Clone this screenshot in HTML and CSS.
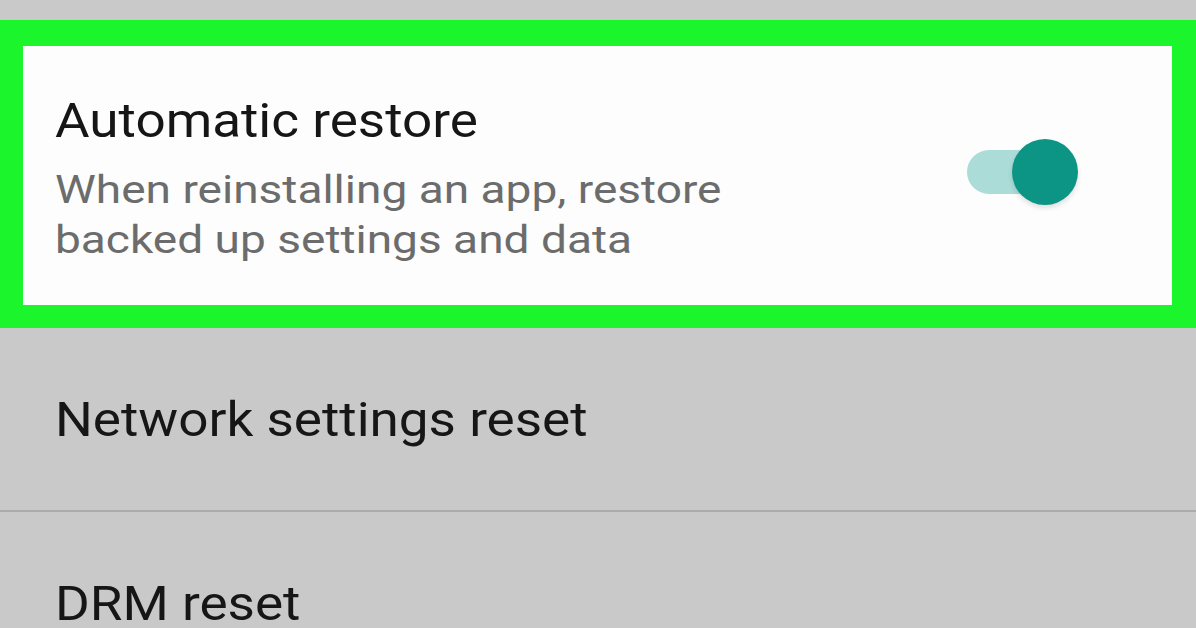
FILE: index.html
```html
<!DOCTYPE html>
<html>
<head>
<meta charset="utf-8">
<link rel="stylesheet" href="styles.css">
</head>
<body>
<div class="page">
  <div class="highlight">
    <div class="setting">
      <div class="texts">
        <div class="title"><span class="wide">Automatic restore</span></div>
        <div class="desc"><span class="wider">When reinstalling an app, restore<br>backed up settings and data</span></div>
      </div>
      <div class="toggle">
        <div class="track"></div>
        <div class="thumb"></div>
      </div>
    </div>
  </div>
  <div class="row divided"><span class="wide">Network settings reset</span></div>
  <div class="row"><span class="wide">DRM reset</span></div>
</div>
</body>
</html>
```
FILE: styles.css
```css
html, body {
  margin: 0;
  padding: 0;
  background: #c9c9c9;
  overflow: hidden;
}
.page {
  width: 1196px;
  height: 628px;
  padding-top: 20px;
  box-sizing: border-box;
  font-family: Roboto, "Noto Sans", sans-serif;
  overflow: hidden;
}
.wide {
  display: inline-block;
  transform: scaleX(1.105);
  transform-origin: left center;
}
.wider {
  display: inline-block;
  transform: scaleX(1.18);
  transform-origin: left center;
}
.highlight {
  border-style: solid;
  border-color: #1bf52c;
  border-width: 26px 24px 23px 23px;
  background: #fdfdfd;
  height: 259px;
}
.setting {
  display: flex;
  align-items: center;
  justify-content: space-between;
  height: 100%;
  padding: 0 94px 0 32px;
  box-sizing: border-box;
}
.texts {
  padding-top: 6px;
}
.title {
  font-size: 48px;
  line-height: 56px;
  color: #161616;
}
.desc {
  margin-top: 16px;
  font-size: 39px;
  line-height: 50px;
  color: #6c6c6c;
}
.toggle {
  position: relative;
  width: 111px;
  height: 66px;
  margin-bottom: 8px;
}
.track {
  position: absolute;
  left: 0;
  top: 11px;
  width: 92px;
  height: 44px;
  border-radius: 22px;
  background: #acdcd8;
}
.thumb {
  position: absolute;
  right: 0;
  top: 0;
  width: 66px;
  height: 66px;
  border-radius: 50%;
  background: #0c9485;
  box-shadow: 0 3px 5px rgba(0,0,0,0.12);
}
.row {
  height: 182px;
  display: flex;
  align-items: center;
  padding-left: 55px;
  font-size: 48px;
  color: #161616;
  box-sizing: border-box;
}
.divided {
  border-bottom: 2px solid #acacac;
  height: 184px;
}
```
